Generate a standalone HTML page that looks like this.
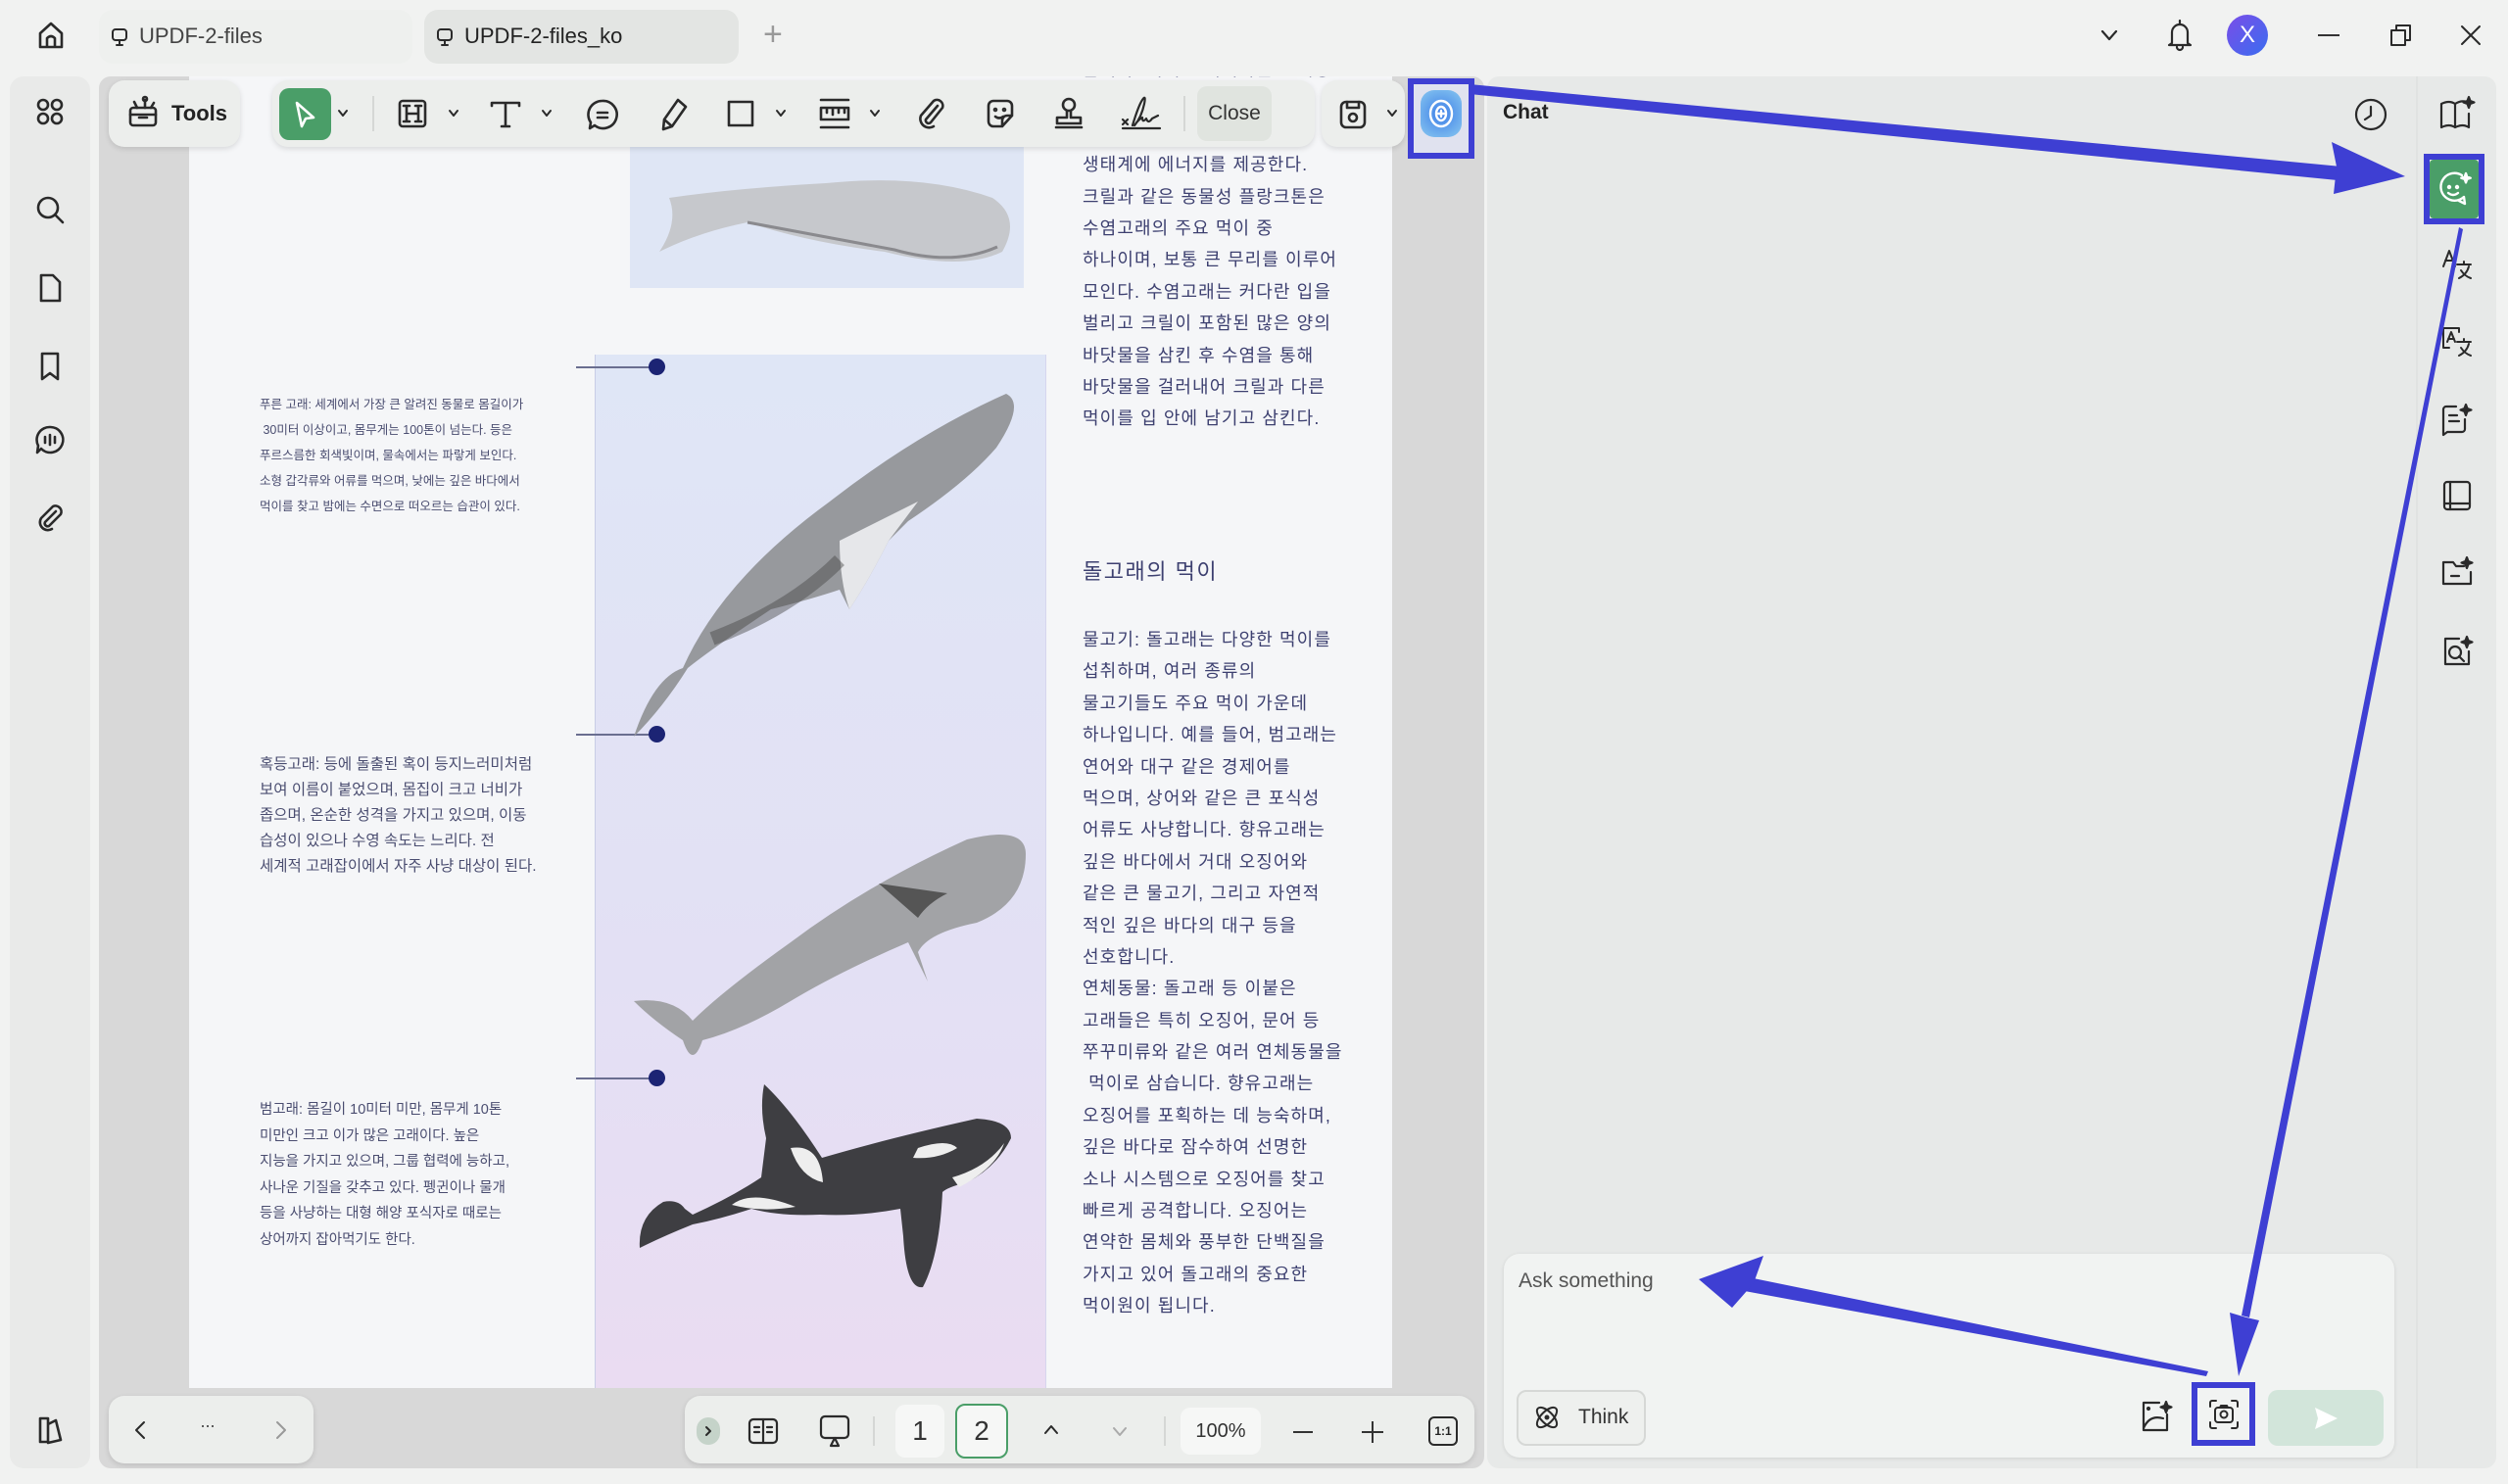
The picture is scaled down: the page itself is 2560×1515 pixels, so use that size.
<!DOCTYPE html>
<html><head><meta charset="utf-8">
<style>
*{margin:0;padding:0;box-sizing:border-box}
body{width:2560px;height:1515px;background:#f1f2f1;font-family:"Liberation Sans","Noto Sans CJK KR",sans-serif;position:relative;overflow:hidden;color:#222}
.a{position:absolute}
.kr{font-family:"Liberation Sans","Noto Sans CJK KR",sans-serif;white-space:nowrap;color:#3d4070}
svg.i{position:absolute;fill:none;stroke:#2a2a2a;stroke-width:2.6;stroke-linecap:round;stroke-linejoin:round}
.pill{position:absolute;background:#eceeec;border-radius:16px;box-shadow:0 2px 6px rgba(0,0,0,.12)}
.rt p{height:32.4px;line-height:32.4px;font-size:18px;letter-spacing:1.1px}
</style></head><body>

<!-- top bar -->
<svg class="i" style="left:36px;top:20px" width="32" height="32" viewBox="0 0 32 32"><path d="M5 14 L16 4 L27 14 V28 H5Z M12 28 V19 Q16 15 20 19 V28"/></svg>
<div class="a" style="left:101px;top:10px;width:320px;height:55px;background:#eef0ee;border-radius:14px"></div>
<div class="a" style="left:433px;top:10px;width:321px;height:55px;background:#e3e5e3;border-radius:14px"></div>
<svg class="i" style="left:112px;top:28px;stroke-width:2" width="20" height="20" viewBox="0 0 20 20"><rect x="3" y="2" width="14" height="11" rx="3"/><path d="M10 13v5M7 18h6"/></svg>
<div class="a" style="left:142px;top:24px;font-size:22px;color:#444">UPDF-2-files</div>
<svg class="i" style="left:444px;top:28px;stroke-width:2" width="20" height="20" viewBox="0 0 20 20"><rect x="3" y="2" width="14" height="11" rx="3"/><path d="M10 13v5M7 18h6"/></svg>
<div class="a" style="left:474px;top:24px;font-size:22px;color:#222">UPDF-2-files_ko</div>
<div class="a" style="left:779px;top:16px;font-size:34px;color:#999;font-weight:200">+</div>
<svg class="i" style="left:2142px;top:28px;stroke-width:2.2" width="22" height="16" viewBox="0 0 22 16"><path d="M4 4l7 8 7-8"/></svg>
<svg class="i" style="left:2210px;top:18px;stroke-width:2.2" width="30" height="36" viewBox="0 0 30 36"><path d="M15 3v3M7 26V15a8 8 0 0 1 16 0v11l3 2H4z M12 30a3 3 0 0 0 6 0"/></svg>
<div class="a" style="left:2273px;top:15px;width:42px;height:42px;border-radius:50%;background:linear-gradient(135deg,#7a4de8,#3a6df0);color:#fff;font-size:24px;text-align:center;line-height:42px">X</div>
<div class="a" style="left:2366px;top:35px;width:22px;height:2px;background:#333"></div>
<svg class="i" style="left:2437px;top:22px;stroke-width:2" width="28" height="28" viewBox="0 0 28 28"><rect x="4" y="9" width="14" height="15"/><path d="M9 9V4h14v15h-5"/></svg>
<svg class="i" style="left:2510px;top:24px;stroke-width:2" width="24" height="24" viewBox="0 0 24 24"><path d="M3 3l18 18M21 3L3 21"/></svg>

<!-- left sidebar -->
<div class="a" style="left:10px;top:78px;width:82px;height:1421px;background:#e9eae9;border-radius:14px"></div>
<svg class="i" style="left:35px;top:98px" width="32" height="32" viewBox="0 0 32 32"><circle cx="9" cy="9" r="5"/><circle cx="23" cy="9" r="5"/><circle cx="9" cy="23" r="5"/><circle cx="23" cy="23" r="5"/></svg>
<svg class="i" style="left:35px;top:198px" width="32" height="32" viewBox="0 0 32 32"><circle cx="14" cy="14" r="10"/><path d="M21 21l8 8"/></svg>
<svg class="i" style="left:35px;top:278px" width="32" height="32" viewBox="0 0 32 32"><path d="M7 3h12l7 7v19H7z"/></svg>
<svg class="i" style="left:35px;top:358px" width="32" height="32" viewBox="0 0 32 32"><path d="M8 3h16v26l-8-6-8 6z"/></svg>
<svg class="i" style="left:35px;top:433px" width="32" height="32" viewBox="0 0 32 32"><path d="M16 3a13 13 0 1 1-9 22l-4 4 1-7A13 13 0 0 1 16 3z M11 13v6M16 11v10M21 13v6"/></svg>
<svg class="i" style="left:35px;top:513px" width="32" height="32" viewBox="0 0 32 32"><path d="M22 9L11 20a3 3 0 0 0 4 4l12-12a6 6 0 0 0-8-8L7 16a8 8 0 0 0 11 11"/></svg>
<svg class="i" style="left:35px;top:1444px" width="32" height="32" viewBox="0 0 32 32"><path d="M6 4h8v24H6z M14 10l8-4 5 20-13 3"/></svg>

<!-- document area -->
<div class="a" style="left:101px;top:78px;width:1414px;height:1421px;background:#d8d8d8;border-radius:12px"></div>
<div class="a" style="left:193px;top:78px;width:1228px;height:1339px;background:#f5f6f8;overflow:hidden">
  <div class="a" style="left:450px;top:69px;width:402px;height:147px;background:#dfe6f5"></div>
  <svg class="a" style="left:450px;top:69px" width="402" height="147" viewBox="0 0 402 147"><path d="M40 55 Q110 45 200 40 Q300 30 370 55 Q400 75 380 110 Q340 130 260 110 Q180 100 120 80 Q70 90 30 110 Q50 80 40 55z" fill="#c6c8cc"/><path d="M120 80 Q200 95 270 108 Q330 125 375 105" stroke="#8a8a8e" stroke-width="3" fill="none"/></svg>
  <div class="a" style="left:414px;top:284px;width:461px;height:1060px;background:linear-gradient(#dfe6f6,#e3e0f4 60%,#eadcf2);border-left:1px solid #c8cde6;border-right:1px solid #d6d6ee"></div>
  <div class="a" style="left:395px;top:296px;width:80px;height:2px;background:#6a6e90"></div>
  <div class="a" style="left:469px;top:288px;width:17px;height:17px;border-radius:50%;background:#1c2474"></div>
  <div class="a" style="left:395px;top:671px;width:80px;height:2px;background:#6a6e90"></div>
  <div class="a" style="left:469px;top:663px;width:17px;height:17px;border-radius:50%;background:#1c2474"></div>
  <div class="a" style="left:395px;top:1022px;width:80px;height:2px;background:#6a6e90"></div>
  <div class="a" style="left:469px;top:1014px;width:17px;height:17px;border-radius:50%;background:#1c2474"></div>
  <svg class="a" style="left:414px;top:284px" width="461" height="1060" viewBox="0 0 461 1060">
    <path d="M40 390 Q60 330 90 320 Q130 230 240 150 Q330 80 420 40 Q440 50 410 95 Q380 130 320 170 L300 190 Q280 230 260 260 L250 240 Q220 250 180 260 Q120 300 95 320 Q70 360 40 390z" fill="#97999d"/>
    <path d="M250 190 Q310 160 330 150 L300 190 Q280 230 260 260 Q250 230 250 190z" fill="#e6e7ea"/>
    <path d="M120 290 Q200 260 250 210" stroke="#444" stroke-width="14" fill="none" opacity=".45"/>
    <path d="M40 660 Q80 655 100 680 Q130 650 200 600 Q280 540 380 495 Q440 480 440 510 Q440 560 390 580 Q340 590 330 610 L340 640 L320 600 Q250 630 200 660 Q150 690 110 700 Q100 730 90 700 Q60 680 40 660z" fill="#a2a3a6"/>
    <path d="M290 540 L360 550 Q340 560 330 575z" fill="#555"/>
    <!-- orca -->
    <path d="M46 912 Q44 880 70 865 Q85 862 92 872 L100 878 Q140 860 170 840 L175 800 Q168 770 173 745 Q200 770 232 820 Q300 800 390 780 Q425 782 425 800 Q410 830 380 845 Q360 850 355 855 Q352 920 335 952 Q318 955 315 900 L312 872 Q270 880 230 878 Q190 880 160 872 Q130 882 100 888 Q70 900 46 912z" fill="#3e3e42"/>
    <path d="M200 810 Q230 805 233 845 Q210 840 200 810z M330 810 Q360 800 370 810 Q350 822 325 820z M140 868 Q160 852 205 870 Q170 876 140 868z M365 840 Q400 830 418 805 Q410 830 372 850z" fill="#eeeeee"/>
  </svg>
  <div class="a kr" style="left:72px;top:322px;font-size:12.5px;line-height:26px;color:#4a4d70">푸른 고래: 세계에서 가장 큰 알려진 동물로 몸길이가<br>&nbsp;30미터 이상이고, 몸무게는 100톤이 넘는다. 등은<br>푸르스름한 회색빛이며, 물속에서는 파랗게 보인다.<br>소형 갑각류와 어류를 먹으며, 낮에는 깊은 바다에서<br>먹이를 찾고 밤에는 수면으로 떠오르는 습관이 있다.</div>
  <div class="a kr" style="left:72px;top:690px;font-size:15.5px;line-height:26px;color:#4a4d70">혹등고래: 등에 돌출된 혹이 등지느러미처럼<br>보여 이름이 붙었으며, 몸집이 크고 너비가<br>좁으며, 온순한 성격을 가지고 있으며, 이동<br>습성이 있으나 수영 속도는 느리다. 전<br>세계적 고래잡이에서 자주 사냥 대상이 된다.</div>
  <div class="a kr" style="left:72px;top:1042px;font-size:14.5px;line-height:26.5px;color:#4a4d70">범고래: 몸길이 10미터 미만, 몸무게 10톤<br>미만인 크고 이가 많은 고래이다. 높은<br>지능을 가지고 있으며, 그룹 협력에 능하고,<br>사나운 기질을 갖추고 있다. 펭귄이나 물개<br>등을 사냥하는 대형 해양 포식자로 때로는<br>상어까지 잡아먹기도 한다.</div>
  <div class="a kr rt" style="left:912px;top:-23px">
    <p>습니다. 이러한 먹이사슬은 해양</p><p>생물들 중 수염고래의 1가</p><p>주요 먹이이며, 해양 전체</p>
    <p>생태계에 에너지를 제공한다.</p><p>크릴과 같은 동물성 플랑크톤은</p><p>수염고래의 주요 먹이 중</p><p>하나이며, 보통 큰 무리를 이루어</p><p>모인다. 수염고래는 커다란 입을</p><p>벌리고 크릴이 포함된 많은 양의</p><p>바닷물을 삼킨 후 수염을 통해</p><p>바닷물을 걸러내어 크릴과 다른</p><p>먹이를 입 안에 남기고 삼킨다.</p>
  </div>
  <div class="a kr" style="left:912px;top:488px;font-size:22px;letter-spacing:1.5px">돌고래의 먹이</div>
  <div class="a kr rt" style="left:912px;top:559px">
    <p>물고기: 돌고래는 다양한 먹이를</p><p>섭취하며, 여러 종류의</p><p>물고기들도 주요 먹이 가운데</p><p>하나입니다. 예를 들어, 범고래는</p><p>연어와 대구 같은 경제어를</p><p>먹으며, 상어와 같은 큰 포식성</p><p>어류도 사냥합니다. 향유고래는</p><p>깊은 바다에서 거대 오징어와</p><p>같은 큰 물고기, 그리고 자연적</p><p>적인 깊은 바다의 대구 등을</p><p>선호합니다.</p><p>연체동물: 돌고래 등 이붙은</p><p>고래들은 특히 오징어, 문어 등</p><p>쭈꾸미류와 같은 여러 연체동물을</p><p>&nbsp;먹이로 삼습니다. 향유고래는</p><p>오징어를 포획하는 데 능숙하며,</p><p>깊은 바다로 잠수하여 선명한</p><p>소나 시스템으로 오징어를 찾고</p><p>빠르게 공격합니다. 오징어는</p><p>연약한 몸체와 풍부한 단백질을</p><p>가지고 있어 돌고래의 중요한</p><p>먹이원이 됩니다.</p>
  </div>
</div>

<!-- toolbar -->
<div class="pill" style="left:111px;top:82px;width:134px;height:68px"></div>
<svg class="i" style="left:128px;top:96px" width="36" height="36" viewBox="0 0 36 36"><rect x="5" y="14" width="26" height="18" rx="3"/><path d="M5 21h26M14 24h8M12 14l-3-6M20 14V6M26 14l3-5"/><circle cx="20" cy="5" r="2"/></svg>
<div class="a" style="left:175px;top:103px;font-size:22px;font-weight:bold">Tools</div>
<div class="pill" style="left:278px;top:82px;width:1064px;height:68px"></div>
<div class="a" style="left:285px;top:90px;width:53px;height:53px;background:#4a9e68;border-radius:10px"></div>
<svg class="i" style="left:296px;top:101px;stroke:#fff" width="30" height="32" viewBox="0 0 30 32"><path d="M7 4l17 15-8 1-4 8z"/></svg>
<svg class="i" style="left:343px;top:110px;stroke-width:2" width="14" height="12" viewBox="0 0 14 12"><path d="M3 3l4 5 4-5"/></svg>
<div class="a" style="left:380px;top:98px;width:2px;height:36px;background:#d5d7d5"></div>
<svg class="i" style="left:404px;top:100px" width="34" height="32" viewBox="0 0 34 32"><rect x="4" y="3" width="26" height="26" rx="3"/><path d="M11 8v16M23 8v16M11 16h12M8 8h6M20 8h6M8 24h6M20 24h6"/></svg>
<svg class="i" style="left:456px;top:110px;stroke-width:2" width="14" height="12" viewBox="0 0 14 12"><path d="M3 3l4 5 4-5"/></svg>
<svg class="i" style="left:498px;top:100px" width="36" height="32" viewBox="0 0 36 32"><path d="M4 5h28M18 5v24M4 5v3M32 5v3M14 29h8"/></svg>
<svg class="i" style="left:551px;top:110px;stroke-width:2" width="14" height="12" viewBox="0 0 14 12"><path d="M3 3l4 5 4-5"/></svg>
<svg class="i" style="left:598px;top:100px" width="34" height="34" viewBox="0 0 34 34"><path d="M17 3a14 14 0 1 1-8 25l-5 3 1-6A14 14 0 0 1 17 3z M12 15h10M12 20h10"/></svg>
<svg class="i" style="left:670px;top:98px" width="34" height="36" viewBox="0 0 34 36"><path d="M22 4l8 7-14 20-9 3 1-10z M8 24l8 7"/></svg>
<svg class="i" style="left:740px;top:100px" width="32" height="32" viewBox="0 0 32 32"><rect x="4" y="4" width="24" height="24"/></svg>
<svg class="i" style="left:790px;top:110px;stroke-width:2" width="14" height="12" viewBox="0 0 14 12"><path d="M3 3l4 5 4-5"/></svg>
<svg class="i" style="left:834px;top:98px" width="36" height="36" viewBox="0 0 36 36"><path d="M4 4h28M4 32h28M4 12h28v12H4z M10 12v5M16 12v7M22 12v5M28 12v5"/></svg>
<svg class="i" style="left:886px;top:110px;stroke-width:2" width="14" height="12" viewBox="0 0 14 12"><path d="M3 3l4 5 4-5"/></svg>
<svg class="i" style="left:933px;top:98px" width="34" height="36" viewBox="0 0 34 36"><path d="M24 10L12 24a3 3 0 0 0 5 3l12-15a6 6 0 0 0-9-7L7 20a9 9 0 0 0 13 11"/></svg>
<svg class="i" style="left:1004px;top:99px" width="34" height="34" viewBox="0 0 34 34"><path d="M5 9a5 5 0 0 1 5-5h14a5 5 0 0 1 5 5v10l-10 11H10a5 5 0 0 1-5-5z M19 30v-6a5 5 0 0 1 5-5h5"/><circle cx="12" cy="13" r="1"/><circle cx="21" cy="13" r="1"/><path d="M12 20q4 3 8 0"/></svg>
<svg class="i" style="left:1074px;top:98px" width="34" height="36" viewBox="0 0 34 36"><circle cx="17" cy="9" r="6"/><path d="M15 15v7H5v6h24v-6H19v-7M4 32h26"/></svg>
<svg class="i" style="left:1142px;top:96px;stroke-width:2.2" width="46" height="40" viewBox="0 0 46 40"><path d="M4 26l5 5M9 26l-5 5M4 35h38M14 32q6-20 10-26q4-6 2 4q-3 14-10 22q4-6 8-8q0 6 4 1q2 6 6 0l6-3"/></svg>
<div class="a" style="left:1208px;top:98px;width:2px;height:36px;background:#d5d7d5"></div>
<div class="a" style="left:1222px;top:88px;width:76px;height:56px;background:#e0e4df;border-radius:10px;font-size:21px;text-align:center;line-height:56px;color:#333">Close</div>
<div class="pill" style="left:1349px;top:82px;width:85px;height:68px"></div>
<svg class="i" style="left:1365px;top:100px" width="32" height="34" viewBox="0 0 32 34"><rect x="4" y="4" width="24" height="26" rx="5"/><path d="M10 4v6h12V4"/><circle cx="16" cy="20" r="4"/></svg>
<svg class="i" style="left:1414px;top:110px;stroke-width:2" width="14" height="12" viewBox="0 0 14 12"><path d="M3 3l4 5 4-5"/></svg>
<div class="a" style="left:1437px;top:80px;width:68px;height:82px;border:6px solid #3e3fd3;background:#e0e2ef"></div>
<div class="a" style="left:1450px;top:92px;width:42px;height:48px;border-radius:14px;background:radial-gradient(circle,#3e7fe8,#89c8f0)"></div>
<svg class="i" style="left:1454px;top:98px;stroke:#fff;stroke-width:2.4" width="34" height="36" viewBox="0 0 34 36"><ellipse cx="17" cy="18" rx="11" ry="13"/><ellipse cx="17" cy="18" rx="5" ry="7"/><path d="M17 15v6M14 18h6"/></svg>

<!-- chat panel -->
<div class="a" style="left:1518px;top:78px;width:1030px;height:1421px;background:#e7e9e8;border-radius:12px"></div>
<div class="a" style="left:2466px;top:78px;width:2px;height:1421px;background:#e0e2e1"></div>
<div class="a" style="left:1534px;top:103px;font-size:21px;font-weight:bold">Chat</div>
<svg class="i" style="left:2401px;top:98px;stroke-width:2.2" width="38" height="38" viewBox="0 0 38 38"><circle cx="19" cy="19" r="15"/><path d="M19 11v9l-6 4"/></svg>
<svg class="i" style="left:2488px;top:96px;stroke-width:2.2" width="40" height="40" viewBox="0 0 40 40"><path d="M4 10q8-4 14 0v24q-6-4-14 0z M18 10q6-4 12-2 M18 34q8-4 14 0V20"/><path d="M32 3l1.5 4 4 1.5-4 1.5-1.5 4-1.5-4-4-1.5 4-1.5z" fill="#2a2a2a"/></svg>
<div class="a" style="left:2474px;top:157px;width:62px;height:72px;border:6px solid #3e3fd3"></div>
<div class="a" style="left:2480px;top:163px;width:50px;height:60px;background:#4a9e68;border-radius:4px"></div>
<svg class="i" style="left:2487px;top:174px;stroke:#fff;stroke-width:2.4" width="38" height="38" viewBox="0 0 38 38"><path d="M26 5a14 14 0 1 0 2 22l1 7-6-3"/><circle cx="13" cy="17" r="1"/><circle cx="21" cy="17" r="1"/><path d="M12 23q5 4 10 0"/><path d="M30 3l1.2 3.5 3.5 1.2-3.5 1.2-1.2 3.5-1.2-3.5-3.5-1.2 3.5-1.2z" fill="#fff"/></svg>
<svg class="i" style="left:2490px;top:252px;stroke-width:2" width="36" height="36" viewBox="0 0 36 36"><path d="M4 20l6-16 6 16M6 14h8M18 18h14M25 15v3M20 32q8-4 10-12M22 24q4 6 10 8"/></svg>
<svg class="i" style="left:2490px;top:331px;stroke-width:2" width="36" height="36" viewBox="0 0 36 36"><path d="M4 4h16v4M4 4v20h6M8 18l4-10 4 10M9 15h6M18 18h14M25 15v3M20 32q8-4 10-12M22 24q4 6 10 8"/></svg>
<svg class="i" style="left:2490px;top:410px;stroke-width:2.2" width="36" height="36" viewBox="0 0 36 36"><path d="M26 18v10a3 3 0 0 1-3 3H8l-4 3V8a3 3 0 0 1 3-3h10M10 14h8M10 20h10"/><path d="M27 3l1.5 4 4 1.5-4 1.5-1.5 4-1.5-4-4-1.5 4-1.5z" fill="#2a2a2a"/></svg>
<svg class="i" style="left:2490px;top:488px;stroke-width:2.2" width="36" height="36" viewBox="0 0 36 36"><rect x="5" y="4" width="26" height="28" rx="3"/><path d="M11 4v28M5 26h26"/></svg>
<svg class="i" style="left:2490px;top:566px;stroke-width:2.2" width="36" height="36" viewBox="0 0 36 36"><path d="M4 8h10l3 4h8M4 8v22h28V18M12 22h8"/><path d="M28 3l1.5 4 4 1.5-4 1.5-1.5 4-1.5-4-4-1.5 4-1.5z" fill="#2a2a2a"/></svg>
<svg class="i" style="left:2490px;top:647px;stroke-width:2.2" width="36" height="36" viewBox="0 0 36 36"><path d="M20 5H6v26h24V18"/><circle cx="16" cy="19" r="6"/><path d="M20 23l5 5"/><path d="M28 3l1.5 4 4 1.5-4 1.5-1.5 4-1.5-4-4-1.5 4-1.5z" fill="#2a2a2a"/></svg>

<!-- input box -->
<div class="a" style="left:1535px;top:1280px;width:909px;height:208px;background:#f1f3f2;border-radius:16px;box-shadow:0 1px 4px rgba(0,0,0,.1)"></div>
<div class="a" style="left:1550px;top:1296px;font-size:21px;color:#555">Ask something</div>
<div class="a" style="left:1548px;top:1419px;width:132px;height:57px;border:2px solid #d6d8d6;border-radius:10px;background:#eef0ee"></div>
<svg class="i" style="left:1564px;top:1432px;stroke-width:2" width="30" height="30" viewBox="0 0 30 30"><ellipse cx="15" cy="15" rx="6" ry="13" transform="rotate(45 15 15)"/><ellipse cx="15" cy="15" rx="6" ry="13" transform="rotate(-45 15 15)"/><circle cx="15" cy="15" r="1.5" fill="#2a2a2a"/></svg>
<div class="a" style="left:1611px;top:1435px;font-size:21px;color:#333">Think</div>
<svg class="i" style="left:2182px;top:1428px;stroke-width:2.2" width="36" height="36" viewBox="0 0 36 36"><path d="M22 4H6v28h24V16M6 30q6-14 20-10"/><circle cx="11" cy="10" r="1"/><path d="M29 3l1.5 4 4 1.5-4 1.5-1.5 4-1.5-4-4-1.5 4-1.5z" fill="#2a2a2a"/></svg>
<div class="a" style="left:2237px;top:1411px;width:65px;height:65px;border:6px solid #3e3fd3"></div>
<svg class="i" style="left:2252px;top:1426px;stroke-width:2" width="36" height="36" viewBox="0 0 36 36"><path d="M4 10V6a2 2 0 0 1 2-2h4M26 4h4a2 2 0 0 1 2 2v4M32 26v4a2 2 0 0 1-2 2h-4M10 32H6a2 2 0 0 1-2-2v-4"/><rect x="9" y="11" width="18" height="15" rx="3"/><circle cx="18" cy="18" r="3.5"/><path d="M14 11l1-2h6l1 2"/></svg>
<div class="a" style="left:2315px;top:1419px;width:118px;height:57px;background:#d2e5da;border-radius:10px"></div>
<svg class="a" style="left:2360px;top:1435px" width="28" height="26" viewBox="0 0 28 26"><path d="M3 2l23 11L3 24l3-11z" fill="#fff"/></svg>

<!-- bottom bars -->
<div class="pill" style="left:111px;top:1425px;width:209px;height:69px"></div>
<svg class="i" style="left:136px;top:1449px;stroke-width:2" width="14" height="22" viewBox="0 0 14 22"><path d="M11 3L3 11l8 8"/></svg>
<div class="a" style="left:204px;top:1445px;font-size:18px;color:#444;letter-spacing:-1px">···</div>
<svg class="i" style="left:280px;top:1449px;stroke:#999;stroke-width:2" width="14" height="22" viewBox="0 0 14 22"><path d="M3 3l8 8-8 8"/></svg>
<div class="pill" style="left:699px;top:1425px;width:806px;height:69px"></div>
<div class="a" style="left:711px;top:1447px;width:24px;height:28px;border-radius:12px;background:#c5d3c9"></div>
<svg class="i" style="left:717px;top:1454px;stroke-width:2" width="12" height="14" viewBox="0 0 12 14"><path d="M4 3l4 4-4 4"/></svg>
<svg class="i" style="left:762px;top:1444px;stroke-width:2.2" width="34" height="34" viewBox="0 0 34 34"><rect x="3" y="5" width="28" height="24" rx="4"/><path d="M17 5v24M8 13h5M8 18h5M21 13h5M21 18h5"/></svg>
<svg class="i" style="left:834px;top:1442px;stroke-width:2.2" width="36" height="38" viewBox="0 0 36 38"><rect x="4" y="4" width="28" height="22" rx="4"/><path d="M18 26l-4 8h8z"/></svg>
<div class="a" style="left:891px;top:1446px;width:2px;height:30px;background:#d5d7d5"></div>
<div class="a" style="left:914px;top:1434px;width:50px;height:54px;background:#f6f7f6;border-radius:10px;font-size:28px;text-align:center;line-height:54px;color:#333">1</div>
<div class="a" style="left:975px;top:1433px;width:54px;height:56px;border:2px solid #4a9e68;border-radius:10px;background:#f6f7f6;font-size:28px;text-align:center;line-height:52px;color:#333">2</div>
<svg class="i" style="left:1063px;top:1452px;stroke-width:2" width="20" height="14" viewBox="0 0 20 14"><path d="M4 11l6-7 6 7"/></svg>
<svg class="i" style="left:1133px;top:1455px;stroke:#aaa;stroke-width:2" width="20" height="14" viewBox="0 0 20 14"><path d="M4 3l6 7 6-7"/></svg>
<div class="a" style="left:1188px;top:1446px;width:2px;height:30px;background:#d5d7d5"></div>
<div class="a" style="left:1205px;top:1437px;width:82px;height:48px;background:#f6f7f6;border-radius:10px;font-size:20px;text-align:center;line-height:48px;color:#333">100%</div>
<div class="a" style="left:1320px;top:1461px;width:20px;height:2px;background:#333"></div>
<div class="a" style="left:1390px;top:1461px;width:22px;height:2px;background:#333"></div>
<div class="a" style="left:1400px;top:1451px;width:2px;height:22px;background:#333"></div>
<div class="a" style="left:1458px;top:1446px;width:30px;height:30px;border:2.4px solid #2a2a2a;border-radius:6px;font-size:12px;text-align:center;line-height:26px;font-weight:bold">1:1</div>

<!-- annotation arrows -->
<svg class="a" style="left:0;top:0" width="2560" height="1515" viewBox="0 0 2560 1515">
  <g fill="#3e3fd3">
    <polygon points="1500,86 2390,170 2386,184 1500,96"/>
    <polygon points="2455,180 2380,145 2385,170 2382,198"/>
    <polygon points="2510,232 2514,234 2296,1345 2288,1343"/>
    <polygon points="2285,1405 2276,1340 2293,1345 2306,1348"/>
    <polygon points="2252,1405 1770,1316 1775,1302 2254,1400"/>
    <polygon points="1734,1306 1800,1282 1790,1310 1768,1335"/>
  </g>
</svg>
</body></html>
